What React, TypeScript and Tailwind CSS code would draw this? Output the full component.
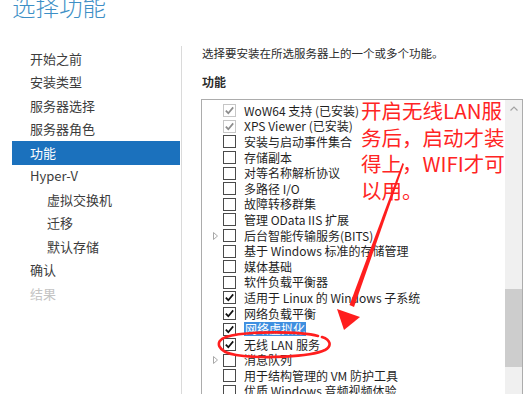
import React from 'react';

type State = 'disabled' | 'off' | 'on';
const rows: { label: string; state: State; expand?: boolean; selected?: boolean }[] = [
  { label: 'WoW64 支持 (已安装)', state: 'disabled' },
  { label: 'XPS Viewer (已安装)', state: 'disabled' },
  { label: '安装与启动事件集合', state: 'off' },
  { label: '存储副本', state: 'off' },
  { label: '对等名称解析协议', state: 'off' },
  { label: '多路径 I/O', state: 'off' },
  { label: '故障转移群集', state: 'off' },
  { label: '管理 OData IIS 扩展', state: 'off' },
  { label: '后台智能传输服务(BITS)', state: 'off', expand: true },
  { label: '基于 Windows 标准的存储管理', state: 'off' },
  { label: '媒体基础', state: 'off' },
  { label: '软件负载平衡器', state: 'off' },
  { label: '适用于 Linux 的 Windows 子系统', state: 'on' },
  { label: '网络负载平衡', state: 'on' },
  { label: '网络虚拟化', state: 'on', selected: true },
  { label: '无线 LAN 服务', state: 'on' },
  { label: '消息队列', state: 'off', expand: true },
  { label: '用于结构管理的 VM 防护工具', state: 'off' },
  { label: '优质 Windows 音频视频体验', state: 'off' },
];

const nav: { label: string; sub?: boolean; active?: boolean; muted?: boolean }[] = [
  { label: '开始之前' },
  { label: '安装类型' },
  { label: '服务器选择' },
  { label: '服务器角色' },
  { label: '功能', active: true },
  { label: 'Hyper-V' },
  { label: '虚拟交换机', sub: true },
  { label: '迁移', sub: true },
  { label: '默认存储', sub: true },
  { label: '确认' },
  { label: '结果', muted: true },
];

function Checkbox({ state }: { state: State }) {
  const disabled = state === 'disabled';
  const checked = state !== 'off';
  return (
    <div
      className={
        'w-[13px] h-[13px] shrink-0 border bg-white flex items-center justify-center ' +
        (disabled ? 'border-[#c6c6c6]' : 'border-[#4a4a4a]')
      }
    >
      {checked && (
        <svg width="11" height="11" viewBox="0 0 11 11">
          <path
            d="M1.8 5.6 L4.3 8.2 L9.2 2.4"
            fill="none"
            stroke={disabled ? '#8c8c8c' : '#111111'}
            strokeWidth="1.7"
          />
        </svg>
      )}
    </div>
  );
}

export default function App() {
  return (
    <div
      className="relative w-[526px] h-[394px] overflow-hidden bg-white flex flex-col"
      style={{ fontFamily: '"Noto Sans CJK SC", "Noto Sans", sans-serif' }}
    >
      <div className="-mt-[6px] h-[52px] shrink-0 pl-[12px] text-[23.5px] leading-[24px] font-light text-[#3d8fc6]">
        选择功能
      </div>
      <div className="flex flex-1 min-h-0">
        <div className="ml-[12px] w-[170px] shrink-0 border-r border-[#dadada] pt-[1px]">
          {nav.map((n) => (
            <div
              key={n.label}
              className={
                'h-[23.5px] mr-[1px] flex items-center text-[13px] leading-[16px] ' +
                (n.sub ? 'pl-[35px] ' : 'pl-[18px] ') +
                (n.active
                  ? 'bg-[#1b71bd] text-white'
                  : n.muted
                  ? 'text-[#c4c4c4]'
                  : 'text-[#3c3c3c]')
              }
            >
              {n.label}
            </div>
          ))}
        </div>
        <div className="flex flex-col pl-[19px] min-w-0">
          <div className="ml-[1px] h-[14px] text-[11.5px] leading-[14px] text-[#2b2b2b] whitespace-nowrap">
            选择要安装在所选服务器上的一个或多个功能。
          </div>
          <div className="ml-[1px] mt-[15px] h-[14px] text-[12px] leading-[14px] font-bold text-[#2b2b2b]">
            功能
          </div>
          <div className="mt-[10px] w-[322px] flex-1 border-t border-l border-r border-[#acacac] flex min-h-0">
            <div className="flex-1 pt-[3px] overflow-hidden">
              {rows.map((r) => (
                <div key={r.label} className="h-[15.6px] flex items-center pl-[11px]">
                  <div className="w-[10px] h-full flex items-center">
                    {r.expand && (
                      <svg width="6" height="8" viewBox="0 0 6 8">
                        <path d="M0.5 0.5 L4.5 4 L0.5 7.5 Z" fill="none" stroke="#a8a8a8" strokeWidth="1" />
                      </svg>
                    )}
                  </div>
                  <Checkbox state={r.state} />
                  <span
                    className={
                      'ml-[8px] text-[12px] leading-[14px] whitespace-nowrap ' +
                      (r.selected ? 'bg-[#3f8fe0] text-white px-[1px] -ml-[-7px]' : 'text-[#1f1f1f]')
                    }
                  >
                    {r.label}
                  </span>
                </div>
              ))}
            </div>
            <div className="w-[17px] shrink-0 bg-[#f0f0f0] flex flex-col">
              <div className="h-[17px] flex items-center justify-center">
                <svg width="8" height="5" viewBox="0 0 8 5">
                  <path d="M0.5 4.5 L4 1 L7.5 4.5" fill="none" stroke="#a3a3a3" strokeWidth="1.2" />
                </svg>
              </div>
              <div className="mt-[172px] h-[78px] bg-[#cdcdcd]" />
            </div>
          </div>
        </div>
      </div>

      <div className="absolute left-[361px] top-[97px] text-[20.5px] leading-[26.5px] text-[#ff2424] whitespace-nowrap pointer-events-none">
        开启无线LAN服
        <br />
        务后，启动才装
        <br />
        得上，WIFI才可
        <br />
        以用。
      </div>

      <svg
        className="absolute left-0 top-0 pointer-events-none"
        width="526"
        height="394"
        viewBox="0 0 526 394"
      >
        <polygon points="402.5,163 404,164 354,307 349.5,305" fill="#ff1e1e" />
        <polygon points="337,309 360,317 344,330" fill="#ff1e1e" />
        <path
          d="M318 336 C 300 331, 245 331, 226 337 C 214 341, 217 352, 236 355 C 262 359, 310 357, 325 350 C 332 346, 331 340, 322 337"
          fill="none"
          stroke="#ff1e1e"
          strokeWidth="2.6"
          strokeLinecap="round"
        />
      </svg>
    </div>
  );
}
